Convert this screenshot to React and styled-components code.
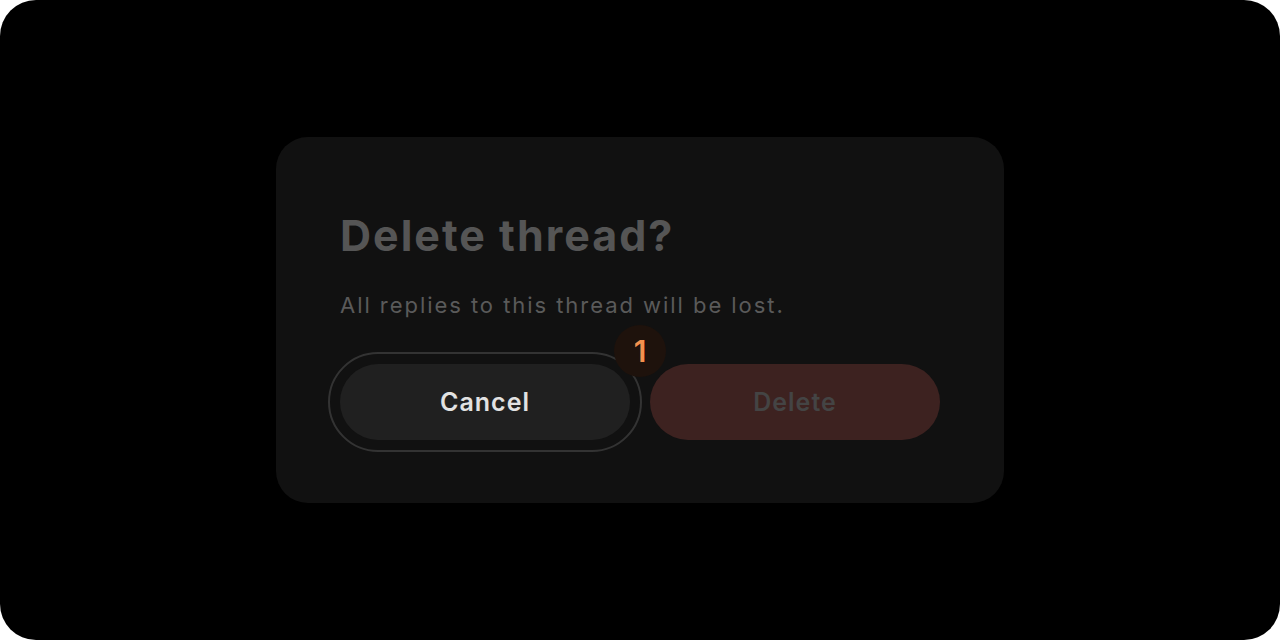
import React from 'react';
import styled, { createGlobalStyle } from "styled-components";

const GlobalStyle = createGlobalStyle`
    html, body {
        margin: 0;
        padding: 0;
        background: #ffffff;
    }
    * {
        box-sizing: border-box;
    }
`;

const Screen = styled.div`
    width: 1280px;
    height: 640px;
    border-radius: 36px;
    background: #000000;
    display: flex;
    align-items: center;
    justify-content: center;
    font-family: Inter, "Noto Sans", sans-serif;
`;

const Dialog = styled.div`
    width: 728px;
    height: 366px;
    border-radius: 32px;
    background: #111111;
    padding: 64px;
    display: flex;
    flex-direction: column;
`;

const Title = styled.h2`
    margin: 0;
    font-size: 43px;
    line-height: 68px;
    font-weight: 700;
    color: #555555;
    letter-spacing: 2px;
`;

const Message = styled.p`
    margin: 20px 0 0;
    font-size: 22px;
    line-height: 33px;
    font-weight: 400;
    color: #5a5a5a;
    letter-spacing: 1.95px;
`;

const Actions = styled.div`
    display: flex;
    gap: 20px;
    margin-top: 42px;
`;

const Slot = styled.div`
    position: relative;
    flex: 1;
    display: flex;
`;

const Button = styled.button`
    flex: 1;
    height: 76px;
    border: none;
    border-radius: 38px;
    font-family: inherit;
    font-size: 25px;
    font-weight: 600;
    letter-spacing: 1px;
    cursor: pointer;
    background: ${p => p.$danger ? "#3d2220" : "#202020"};
    color: ${p => p.$danger ? "#444444" : "#e2e2e2"};
    outline: ${p => p.$focused ? "2px solid #333333" : "none"};
    outline-offset: 10px;
`;

const Badge = styled.span`
    position: absolute;
    top: -39px;
    right: -36px;
    width: 52px;
    height: 52px;
    border-radius: 50%;
    background: #1e120c;
    color: #f3914f;
    font-size: 30px;
    font-weight: 600;
    display: flex;
    align-items: center;
    justify-content: center;
`;

export default function App() {
    return (
        <>
            <GlobalStyle />
            <Screen>
                <Dialog>
                    <Title>Delete thread?</Title>
                    <Message>All replies to this thread will be lost.</Message>
                    <Actions>
                        <Slot>
                            <Button $focused>Cancel</Button>
                            <Badge>1</Badge>
                        </Slot>
                        <Slot>
                            <Button $danger>Delete</Button>
                        </Slot>
                    </Actions>
                </Dialog>
            </Screen>
        </>
    );
}
